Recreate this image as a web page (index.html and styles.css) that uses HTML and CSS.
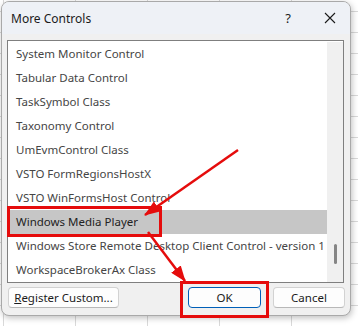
FILE: index.html
```html
<!DOCTYPE html>
<html lang="en">
<head>
    <meta charset="UTF-8">
    <title>More Controls</title>
    <link rel="stylesheet" href="styles.css">
</head>
<body>
    <div class="sheet">
        <div class="dialog">
            <div class="titlebar">
                <span class="title">More Controls</span>
                <span class="help">?</span>
                <span class="close">
                    <svg width="12" height="12" viewBox="0 0 12 12"><path d="M1 1 L11 11 M11 1 L1 11" stroke="#1b1b1b" stroke-width="1.1" fill="none"/></svg>
                </span>
            </div>
            <div class="content">
                <div class="listbox">
                    <ul class="items">
                        <li>System Monitor Control</li>
                        <li>Tabular Data Control</li>
                        <li>TaskSymbol Class</li>
                        <li>Taxonomy Control</li>
                        <li>UmEvmControl Class</li>
                        <li>VSTO FormRegionsHostX</li>
                        <li>VSTO WinFormsHost Control</li>
                        <li class="selected">Windows Media Player</li>
                        <li>Windows Store Remote Desktop Client Control - version 1</li>
                        <li>WorkspaceBrokerAx Class</li>
                    </ul>
                    <div class="scrollbar"><div class="thumb"></div></div>
                </div>
                <div class="actions">
                    <button class="btn register"><u>R</u>egister Custom...</button>
                    <button class="btn ok">OK</button>
                    <button class="btn cancel">Cancel</button>
                </div>
            </div>
        </div>

        <!-- red callouts drawn over the dialog -->
        <svg class="annot" width="358" height="326" viewBox="0 0 358 326">
            <defs>
                <marker id="head" markerWidth="16" markerHeight="12" refX="15" refY="6" orient="auto" markerUnits="userSpaceOnUse">
                    <path d="M0 0 L16 6 L0 12 Z" fill="#e50c0c"/>
                </marker>
            </defs>
            <rect x="8.5" y="207.5" width="152" height="28" fill="none" stroke="#e50c0c" stroke-width="3"/>
            <rect x="181.5" y="282.5" width="86" height="34" fill="none" stroke="#e50c0c" stroke-width="3"/>
            <line x1="238" y1="150" x2="145" y2="215" stroke="#e50c0c" stroke-width="2.5" marker-end="url(#head)"/>
            <line x1="148" y1="232" x2="185" y2="281" stroke="#e50c0c" stroke-width="2.5" marker-end="url(#head)"/>
        </svg>
    </div>
</body>
</html>
```

FILE: styles.css
```css
:root {
    --ink: #1b1b1b;
    --muted: #454545;
    --panel: #f0f0f0;
    --frame: #9a9a9a;
    --red: #e50c0c;
}

body {
    margin: 0;
    font-family: 'Noto Sans', 'Open Sans', sans-serif;
    color: var(--ink);
}

.sheet {
    position: relative;
    width: 358px;
    height: 326px;
    overflow: hidden;
    background-color: #fff;
    background-image:
        linear-gradient(to right, #d9d9d9 1px, transparent 1px),
        linear-gradient(to bottom, #d9d9d9 1px, transparent 1px);
    background-size: 72px 21px;
    background-position: 3px 11px;
}

.dialog {
    position: relative;
    top: 1px;
    left: 1px;
    width: 348px;
    height: 313px;
    border: 1px solid #a9a9a9;
    border-radius: 8px;
    background: var(--panel);
    box-shadow: 1px 2px 6px rgba(0, 0, 0, 0.25);
    display: flex;
    flex-direction: column;
    overflow: hidden;
}

.titlebar {
    height: 32px;
    display: flex;
    align-items: center;
    background: #eef1f6;
    padding-left: 9px;
    flex-shrink: 0;
}

.title {
    font-size: 12px;
    flex: 1;
}

.help {
    font-size: 13px;
    width: 20px;
    text-align: center;
    margin-right: 26px;
}

.close {
    width: 12px;
    height: 12px;
    display: flex;
    margin-right: 14px;
}

.content {
    padding: 6px 5px 0 5px;
    display: flex;
    flex-direction: column;
}

.listbox {
    display: flex;
    width: 335px;
    border: 1px solid #7f7f7f;
    background: #fff;
    padding-top: 1px;
}

.items {
    list-style: none;
    margin: 0;
    padding: 0;
    flex: 1;
}

.items li {
    height: 24px;
    line-height: 24px;
    padding-left: 8px;
    font-size: 11.5px;
    color: var(--muted);
    white-space: nowrap;
    overflow: hidden;
}

.items li.selected {
    background: #c6c6c6;
    color: #222;
}

.scrollbar {
    width: 16px;
    background: #f0f0f0;
    display: flex;
    justify-content: center;
    align-items: flex-end;
    padding-bottom: 18px;
    box-sizing: border-box;
}

.thumb {
    width: 3px;
    height: 20px;
    border-radius: 2px;
    background: #858585;
}

.actions {
    display: flex;
    gap: 12px;
    margin-top: 4px;
    padding-left: 1px;
}

.btn {
    height: 21px;
    padding: 0;
    font-family: inherit;
    font-size: 11.5px;
    color: var(--ink);
    background: #fdfdfd;
    border: 1px solid #d2d2d2;
    border-bottom-color: #b8b8b8;
    border-radius: 4px;
}

.register {
    width: 111px;
    margin-right: auto;
}

.ok {
    width: 73px;
    border: 1px solid #005fb8;
}

.cancel {
    width: 72px;
}

.annot {
    position: absolute;
    top: 0;
    left: 0;
    pointer-events: none;
}
```
